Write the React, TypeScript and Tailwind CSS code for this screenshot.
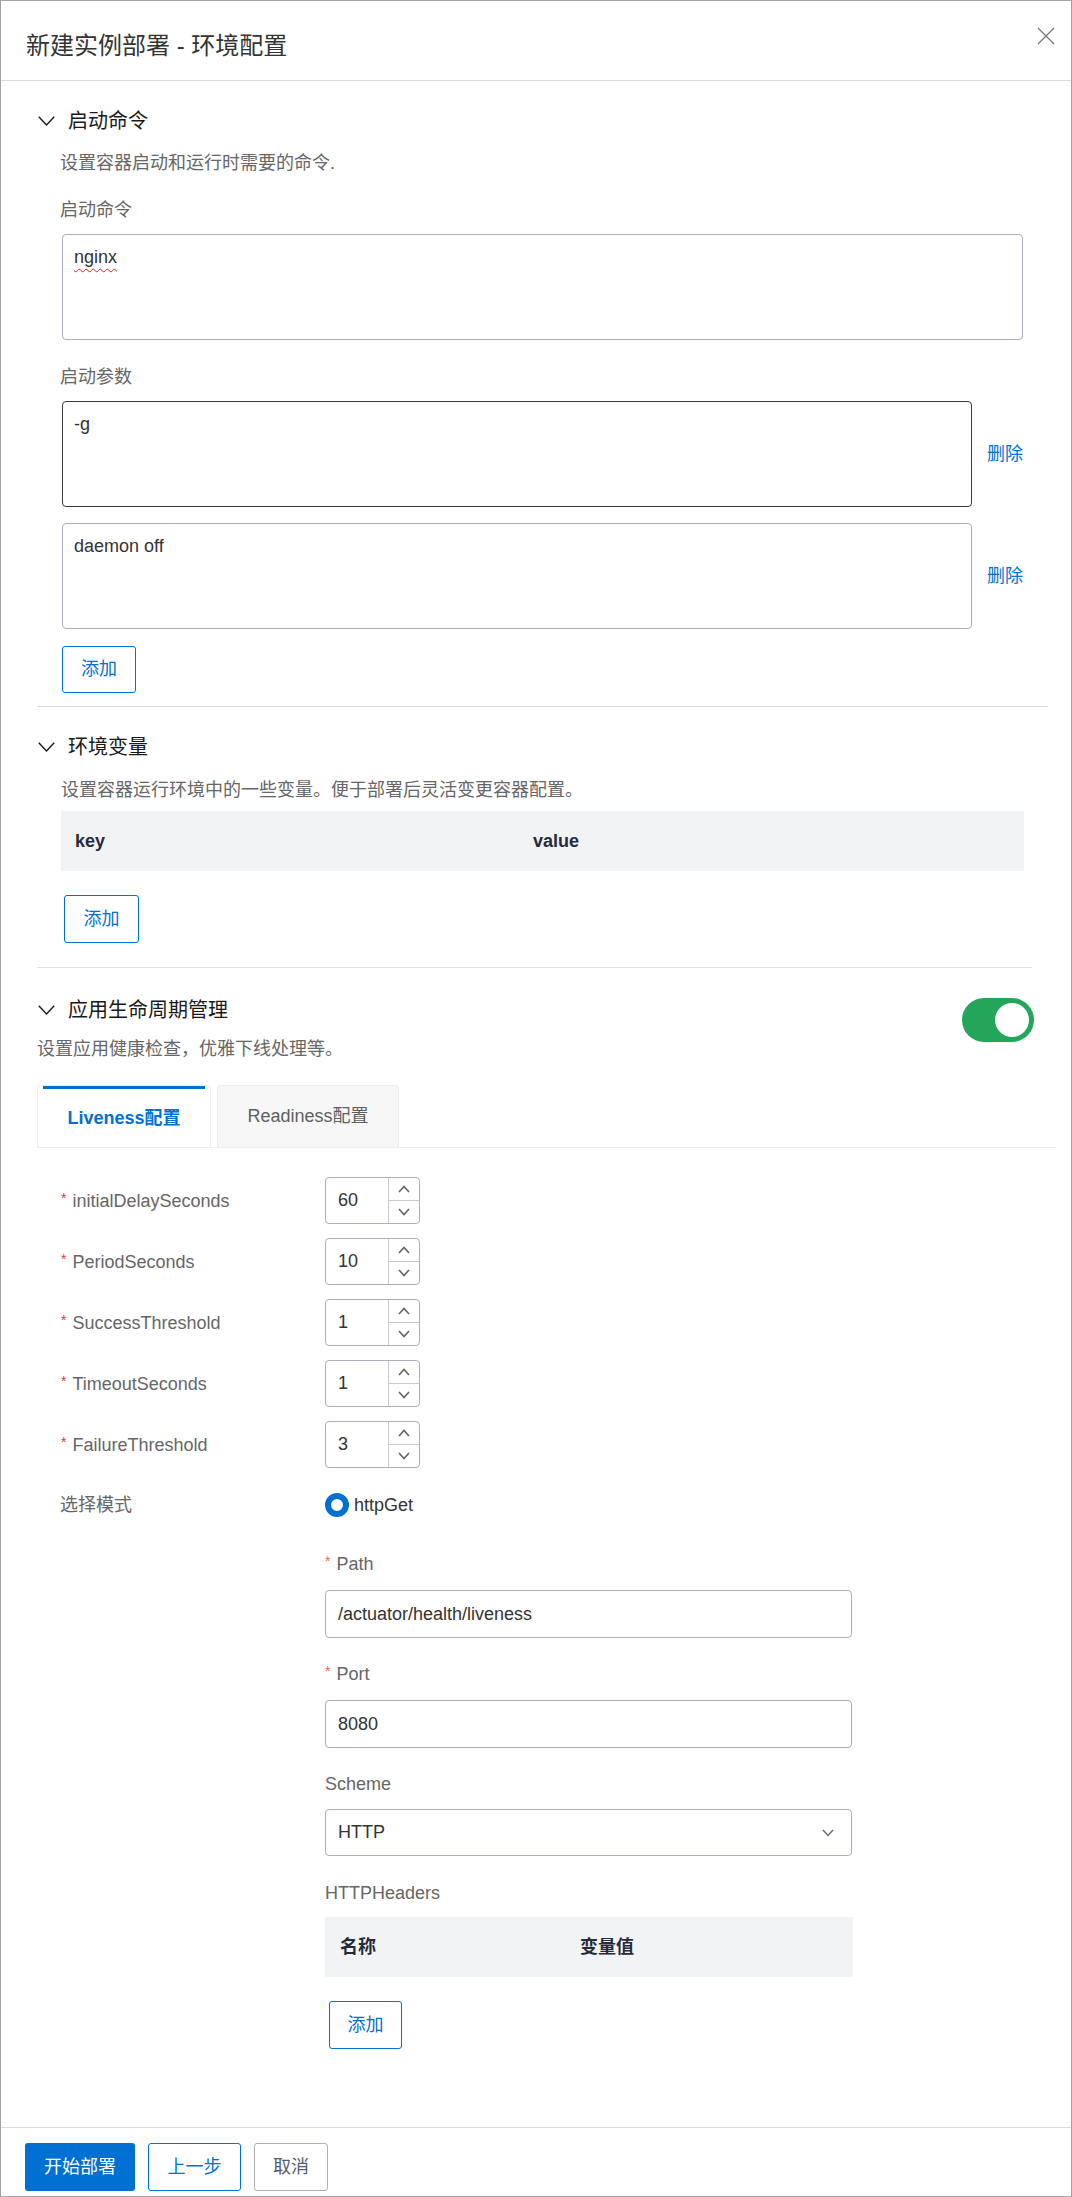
import React from 'react';

function Chevron() {
  return (
    <svg width="17" height="10" viewBox="0 0 17 10" fill="none">
      <path d="M0.8 0.8 L8.5 9 L16.2 0.8" stroke="#1a1a1a" strokeWidth="1.4" />
    </svg>
  );
}

function SmallArrow({ up }: { up?: boolean }) {
  return (
    <svg width="12" height="8" viewBox="0 0 12 8" fill="none">
      <path d={up ? 'M1 7 L6 1.5 L11 7' : 'M1 1 L6 6.5 L11 1'} stroke="#666" strokeWidth="1.7" />
    </svg>
  );
}

function SectionTitle({ title }: { title: string }) {
  return (
    <div className="flex h-[28px] items-center gap-[13px] pl-[1px]">
      <Chevron />
      <span className="text-[20px] leading-[28px] text-[#191919]">{title}</span>
    </div>
  );
}

function Required({ orange }: { orange?: boolean }) {
  return (
    <span className={`mb-[6px] mr-[6px] text-[14px] leading-[14px] ${orange ? 'text-[#f4664a]' : 'text-[#e5393c]'}`}>
      *
    </span>
  );
}

function NumberField({ label, value }: { label: string; value: string }) {
  return (
    <div className="flex items-center">
      <div className="flex w-[288px] items-center pl-[24px] text-[18px] leading-[24px] text-[#666]">
        <Required />
        <span>{label}</span>
      </div>
      <div className="flex h-[47px] w-[95px] rounded-[4px] border border-[#adb0b8]">
        <div className="flex flex-1 items-center pl-[12px] text-[18px] text-[#333]">{value}</div>
        <div className="flex w-[31px] flex-col border-l border-[#c8cacf]">
          <div className="flex flex-1 items-center justify-center border-b border-[#c8cacf]">
            <SmallArrow up />
          </div>
          <div className="flex flex-1 items-center justify-center">
            <SmallArrow />
          </div>
        </div>
      </div>
    </div>
  );
}

function AddButton({ className }: { className: string }) {
  return (
    <button
      className={`flex items-center justify-center rounded-[3px] border border-[#0070d2] bg-white text-[18px] text-[#0070d2] ${className}`}
    >
      添加
    </button>
  );
}

export default function App() {
  const probes = [
    { label: 'initialDelaySeconds', value: '60' },
    { label: 'PeriodSeconds', value: '10' },
    { label: 'SuccessThreshold', value: '1' },
    { label: 'TimeoutSeconds', value: '1' },
    { label: 'FailureThreshold', value: '3' },
  ];

  return (
    <div className="flex h-[2197px] w-[1072px] flex-col border border-[#a3a3a3] bg-white font-['Liberation_Sans','Noto_Sans_CJK_SC',sans-serif]">
      {/* header */}
      <div className="flex h-[80px] shrink-0 items-start justify-between border-b border-[#dcdcdc] pl-[25px] pr-[16px]">
        <h1 className="mt-[29px] text-[24px] leading-[32px] text-[#333]">新建实例部署 - 环境配置</h1>
        <svg className="mt-[26px]" width="18" height="18" viewBox="0 0 18 18" fill="none">
          <path d="M1 1 L17 17 M17 1 L1 17" stroke="#777" strokeWidth="1.3" />
        </svg>
      </div>

      {/* body */}
      <div className="flex flex-1 flex-col pl-[36px]">
        {/* 启动命令 */}
        <div className="mt-[26px]">
          <SectionTitle title="启动命令" />
        </div>
        <p className="mt-[16px] pl-[23px] text-[18px] leading-[24px] text-[#666]">设置容器启动和运行时需要的命令.</p>
        <p className="mt-[23px] pl-[23px] text-[18px] leading-[24px] text-[#666]">启动命令</p>
        <div className="ml-[25px] mt-[12px] h-[106px] w-[961px] rounded-[4px] border border-[#adb0b8] px-[11px] pt-[10px] text-[18px] leading-[24px] text-[#333]">
          <span className="underline decoration-[#e02020] decoration-wavy decoration-1 underline-offset-[5px]">nginx</span>
        </div>
        <p className="mt-[25px] pl-[23px] text-[18px] leading-[24px] text-[#666]">启动参数</p>
        <div className="mt-[12px] flex items-center">
          <div className="ml-[25px] h-[106px] w-[910px] rounded-[4px] border border-[#3c3c3c] px-[11px] pt-[10px] text-[18px] leading-[24px] text-[#333]">
            -g
          </div>
          <span className="ml-[15px] text-[18px] text-[#0070d2]">删除</span>
        </div>
        <div className="mt-[16px] flex items-center">
          <div className="ml-[25px] h-[106px] w-[910px] rounded-[4px] border border-[#adb0b8] px-[11px] pt-[10px] text-[18px] leading-[24px] text-[#333]">
            daemon off
          </div>
          <span className="ml-[15px] text-[18px] text-[#0070d2]">删除</span>
        </div>
        <AddButton className="ml-[25px] mt-[17px] h-[47px] w-[74px]" />
        <div className="mt-[13px] h-px w-[1011px] bg-[#d5dde3]" />

        {/* 环境变量 */}
        <div className="mt-[26px]">
          <SectionTitle title="环境变量" />
        </div>
        <p className="mt-[17px] pl-[24px] text-[18px] leading-[24px] text-[#666]">
          设置容器运行环境中的一些变量。便于部署后灵活变更容器配置。
        </p>
        <div className="ml-[24px] mt-[9px] flex h-[60px] w-[963px] items-center bg-[#f2f3f5] pl-[14px] text-[18px] font-bold text-[#252b3a]">
          <span className="w-[458px]">key</span>
          <span>value</span>
        </div>
        <AddButton className="ml-[27px] mt-[24px] h-[48px] w-[75px]" />
        <div className="mt-[24px] h-px w-[995px] bg-[#dfe1e6]" />

        {/* 应用生命周期管理 */}
        <div className="mt-[28px] flex w-[997px] items-start justify-between">
          <div className="flex flex-col">
            <SectionTitle title="应用生命周期管理" />
            <p className="mt-[13px] text-[18px] leading-[24px] text-[#666]">设置应用健康检查，优雅下线处理等。</p>
          </div>
          <div className="mt-[2px] flex h-[44px] w-[72px] items-center justify-end rounded-full bg-[#23a55a] pr-[5px]">
            <div className="h-[34px] w-[34px] rounded-full bg-white" />
          </div>
        </div>

        {/* tabs */}
        <div className="mt-[24px] flex h-[63px] w-[1019px] items-end border-b border-[#eeeeee]">
          <div className="flex h-full w-[174px] flex-col rounded-t-[4px] border-x border-t border-[#eeeeee] bg-white">
            <div className="mx-[5px] h-[3px] bg-[#0070d2]" />
            <div className="flex flex-1 items-center justify-center text-[18px] font-bold text-[#0070d2]">Liveness配置</div>
          </div>
          <div className="ml-[6px] flex h-full w-[182px] items-center justify-center rounded-t-[4px] border-x border-t border-[#ececec] bg-[#f7f7f7] text-[18px] text-[#5f5f5f]">
            Readiness配置
          </div>
        </div>

        <div className="mt-[29px] flex flex-col gap-[14px]">
          {probes.map((p) => (
            <NumberField key={p.label} label={p.label} value={p.value} />
          ))}
        </div>

        <div className="mt-[25px] flex h-[24px] items-center">
          <span className="w-[288px] pl-[23px] text-[18px] text-[#666]">选择模式</span>
          <div className="flex items-center gap-[5px]">
            <div className="h-[24px] w-[24px] rounded-full border-[6px] border-[#0070d2] bg-white" />
            <span className="text-[18px] text-[#333]">httpGet</span>
          </div>
        </div>

        <div className="ml-[288px] mt-[35px] flex h-[24px] items-center text-[18px] text-[#666]">
          <Required orange />
          <span>Path</span>
        </div>
        <div className="ml-[288px] mt-[14px] flex h-[48px] w-[527px] items-center rounded-[4px] border border-[#adb0b8] pl-[12px] text-[18px] text-[#333]">
          /actuator/health/liveness
        </div>

        <div className="ml-[288px] mt-[24px] flex h-[24px] items-center text-[18px] text-[#666]">
          <Required orange />
          <span>Port</span>
        </div>
        <div className="ml-[288px] mt-[14px] flex h-[48px] w-[527px] items-center rounded-[4px] border border-[#adb0b8] pl-[12px] text-[18px] text-[#333]">
          8080
        </div>

        <p className="ml-[288px] mt-[24px] text-[18px] leading-[24px] text-[#666]">Scheme</p>
        <div className="ml-[288px] mt-[13px] flex h-[47px] w-[527px] items-center justify-between rounded-[4px] border border-[#adb0b8] pl-[12px] pr-[17px] text-[18px] text-[#333]">
          <span>HTTP</span>
          <svg width="12" height="8" viewBox="0 0 12 8" fill="none">
            <path d="M1 1 L6 6.5 L11 1" stroke="#6b6b6b" strokeWidth="1.5" />
          </svg>
        </div>

        <p className="ml-[288px] mt-[25px] text-[18px] leading-[24px] text-[#666]">HTTPHeaders</p>
        <div className="ml-[288px] mt-[12px] flex h-[60px] w-[528px] items-center bg-[#f2f3f5] pl-[15px] text-[18px] font-bold text-[#252b3a]">
          <span className="w-[240px]">名称</span>
          <span>变量值</span>
        </div>
        <AddButton className="ml-[292px] mt-[24px] h-[48px] w-[73px]" />
      </div>

      {/* footer */}
      <div className="flex h-[69px] shrink-0 items-start gap-[13px] border-t border-[#dcdcdc] pl-[24px] pt-[15px]">
        <button className="h-[48px] w-[110px] rounded-[3px] bg-[#0070d2] text-[18px] text-white">开始部署</button>
        <button className="h-[48px] w-[93px] rounded-[3px] border border-[#0070d2] bg-white text-[18px] text-[#0070d2]">
          上一步
        </button>
        <button className="h-[48px] w-[74px] rounded-[3px] border border-[#adb0b8] bg-white text-[18px] text-[#575d6c]">
          取消
        </button>
      </div>
    </div>
  );
}
